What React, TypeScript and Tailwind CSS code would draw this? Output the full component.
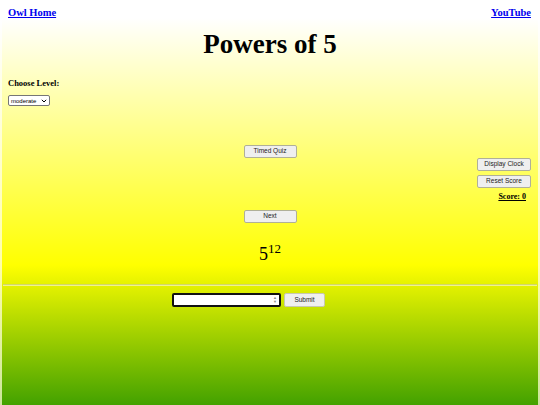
import React from "react";

const btn =
  "h-[13px] bg-[#efefef] border border-[#b0b098] rounded-[2px] text-[6.5px] leading-none text-[#222] flex items-center justify-center font-['Liberation_Sans',Arial,sans-serif]";

function App() {
  return (
    <div className="h-[405px] w-full overflow-hidden bg-[linear-gradient(to_bottom,#ffffff_20px,#ffffa8_265px,#b8dc98_455px)]">
      <div className="mx-[2px] h-full bg-[linear-gradient(to_bottom,#ffffff_18px,#ffff00_265px,#008000_455px)] font-['Liberation_Serif','Times_New_Roman',serif]">
        {/* top links */}
        <div className="flex justify-between pt-[7px] pl-[6px] pr-[7px] text-[10.5px] leading-[12px] font-bold">
          <a href="#" className="underline text-[#0000ee]">
            Owl Home
          </a>
          <a href="#" className="underline text-[#0000ee]">
            YouTube
          </a>
        </div>

        <h1 className="mt-[10px] text-center text-[27px] leading-[30px] font-bold text-black">
          Powers of 5
        </h1>

        <div className="pl-[6px]">
          <h3 className="mt-[19px] text-[8.5px] leading-[10px] font-bold text-black">
            Choose Level:
          </h3>
          <div className="mt-[7px] w-[42px] h-[11px] bg-white border border-[#767676] rounded-[2px] flex items-center justify-between px-[2px] font-['Liberation_Sans',Arial,sans-serif] text-[6px] leading-none text-black">
            <span>moderate</span>
            <svg width="6" height="4" viewBox="0 0 6 4">
              <path d="M0.8 0.8 L3 3 L5.2 0.8" fill="none" stroke="#000" strokeWidth="1" />
            </svg>
          </div>
        </div>

        {/* middle */}
        <div className="mt-[39px] grid grid-cols-[1fr_auto_1fr]">
          <div />
          <div className="flex flex-col items-center">
            <button className={btn + " w-[53px]"}>Timed Quiz</button>
            <button className={btn + " w-[53px] mt-[52px]"}>Next</button>
            <div className="mt-[19px] flex items-start text-black">
              <span className="mt-[3px] text-[18px] leading-[18px]">5</span>
              <span className="text-[13px] leading-[13px]">12</span>
            </div>
          </div>
          <div className="flex flex-col items-end pr-[7px] pt-[13px]">
            <button className={btn + " w-[54px]"}>Display Clock</button>
            <button className={btn + " w-[54px] mt-[4px]"}>Reset Score</button>
            <div className="mt-[4px] mr-[5px] text-[8px] leading-[10px] font-bold underline text-black">
              Score: 0
            </div>
          </div>
        </div>

        <div className="mt-[21px] mx-[1px] h-[2px] border-t border-b border-t-[#d2d66a] border-b-[#eef290]" />

        <div className="mt-[7px] flex items-center pl-[170px]">
          <div className="w-[109px] h-[14px] bg-white border-2 border-[#111] rounded-[2px] flex items-center justify-end pr-[2px]">
            <div className="flex flex-col items-center text-[#888] text-[4px] leading-[4px]">
              <span>▲</span>
              <span>▼</span>
            </div>
          </div>
          <button className={btn + " ml-[3px] w-[41px] h-[14px] border-[#c8c8b0]"}>Submit</button>
        </div>
      </div>
    </div>
  );
}

export default App;
